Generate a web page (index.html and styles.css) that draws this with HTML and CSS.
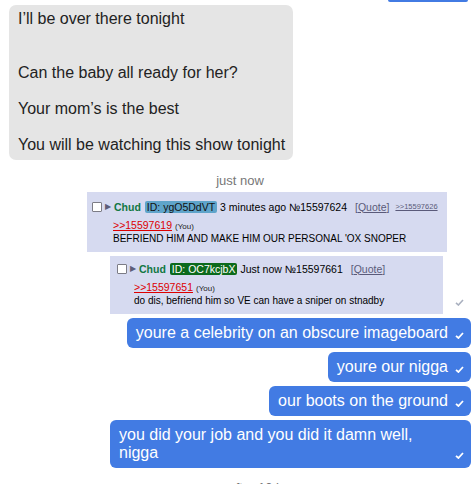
FILE: index.html
```html
<!DOCTYPE html>
<html>
<head>
<meta charset="utf-8">
<link rel="stylesheet" href="styles.css">
</head>
<body>
<div class="chat">
  <div class="tail"></div>
  <div class="row in">
    <div class="bubble grey">
      <p>I’ll be over there tonight<br><br></p>
      <p>Can the baby all ready for her?</p>
      <p>Your mom’s is the best</p>
      <p>You will be watching this show tonight</p>
    </div>
  </div>
  <div class="stamp">just now</div>
  <div class="row out">
    <div class="shot shot1">
      <div class="hdr">
        <span class="cb"></span><span class="tri">▶</span><span class="name">Chud</span><span class="id id-blue">ID: ygO5DdVT</span><span class="meta">3 minutes ago №15597624</span><span class="quote">[<u>Quote</u>]</span><span class="back">&gt;&gt;15597626</span>
      </div>
      <div class="body">
        <div class="qline"><span class="ql">&gt;&gt;15597619</span><span class="you">(You)</span></div>
        <div class="txt">BEFRIEND HIM AND MAKE HIM OUR PERSONAL 'OX SNOPER</div>
      </div>
    </div>
  </div>
  <div class="row out row-shot2">
    <div class="shot shot2">
      <div class="hdr">
        <span class="cb"></span><span class="tri">▶</span><span class="name">Chud</span><span class="id id-green">ID: OC7kcjbX</span><span class="meta">Just now №15597661</span><span class="quote">[<u>Quote</u>]</span>
      </div>
      <div class="body">
        <div class="qline"><span class="ql">&gt;&gt;15597651</span><span class="you">(You)</span></div>
        <div class="txt">do dis, befriend him so VE can have a sniper on stnadby</div>
      </div>
    </div>
    <svg class="tick-grey" width="9" height="7" viewBox="0 0 9 7"><path d="M1 3.8 L3.4 6 L8 1" fill="none" stroke="#a9b0bf" stroke-width="1.6"/></svg>
  </div>
  <div class="row out">
    <div class="bubble blue"><span class="btext">youre a celebrity on an obscure imageboard</span><svg class="tick" width="9" height="7" viewBox="0 0 9 7"><path d="M1 3.8 L3.4 6 L8 1" fill="none" stroke="#fff" stroke-width="1.8"/></svg></div>
  </div>
  <div class="row out">
    <div class="bubble blue"><span class="btext">youre our nigga</span><svg class="tick" width="9" height="7" viewBox="0 0 9 7"><path d="M1 3.8 L3.4 6 L8 1" fill="none" stroke="#fff" stroke-width="1.8"/></svg></div>
  </div>
  <div class="row out">
    <div class="bubble blue"><span class="btext">our boots on the ground</span><svg class="tick" width="9" height="7" viewBox="0 0 9 7"><path d="M1 3.8 L3.4 6 L8 1" fill="none" stroke="#fff" stroke-width="1.8"/></svg></div>
  </div>
  <div class="row out">
    <div class="bubble blue"><span class="btext">you did your job and you did it damn well, nigga</span><svg class="tick" width="9" height="7" viewBox="0 0 9 7"><path d="M1 3.8 L3.4 6 L8 1" fill="none" stroke="#fff" stroke-width="1.8"/></svg></div>
  </div>
  <div class="stamp stamp-bottom">seen after 10 h</div>
</div>
</body>
</html>
```
FILE: styles.css
```css
html, body {
  margin: 0;
  padding: 0;
  background: #fff;
}
body {
  width: 475px;
  height: 484px;
  overflow: hidden;
  font-family: "Liberation Sans", Arial, sans-serif;
}
.chat {
  display: flex;
  flex-direction: column;
}
.tail {
  align-self: flex-end;
  width: 80px;
  height: 2px;
  margin-right: 7px;
  background: #427be3;
  border-radius: 0 0 3px 3px;
}
.row {
  display: flex;
}
.row.in {
  justify-content: flex-start;
  padding-left: 9px;
  margin-top: 3px;
}
.row.out {
  justify-content: flex-end;
  padding-right: 4px;
  margin-top: 4px;
}
.bubble.grey {
  background: #e5e5e5;
  color: #222;
  font-size: 16px;
  line-height: 18px;
  padding: 5px 8px 6px 9px;
  border-radius: 7px;
}
.bubble.grey p {
  margin: 0 0 18px;
}
.bubble.grey p:last-child {
  margin-bottom: 0;
}
.stamp {
  text-align: center;
  font-size: 13px;
  line-height: 15px;
  color: #777;
  margin-top: 13px;
  padding-left: 5px;
}
.stamp-bottom {
  margin-top: 12px;
}

/* imageboard screenshots */
.shot {
  background: #d6daf0;
  color: #000;
  box-sizing: border-box;
  padding: 8px 0 7px 5px;
  white-space: nowrap;
}
.shot1 {
  width: 360px;
  margin-right: 24px;
}
.row-shot2 {
  align-items: flex-end;
  margin-top: 3px;
}
.shot2 {
  width: 333px;
  padding-top: 6px;
  padding-left: 7px;
}
.tick-grey {
  margin-left: 12px;
  margin-right: 7px;
  margin-bottom: 8px;
}
.hdr {
  display: flex;
  align-items: center;
  height: 13px;
  font-size: 10.5px;
}
.cb {
  width: 8px;
  height: 8px;
  border: 1px solid #7c7c86;
  background: #fff;
  border-radius: 1px;
  margin-right: 3px;
}
.tri {
  font-size: 8px;
  color: #5d5d78;
  margin-right: 3px;
}
.name {
  color: #117743;
  font-weight: bold;
  margin-right: 4px;
}
.id {
  padding: 0 2px;
  border-radius: 2px;
  margin-right: 3px;
  line-height: 12px;
}
.id-blue {
  background: #5fa4ca;
  color: #111;
}
.id-green {
  background: #0c6a1c;
  color: #fff;
}
.quote {
  color: #5a5a7a;
  margin-left: 8px;
}
.back {
  color: #5a5a7a;
  font-size: 7.5px;
  text-decoration: underline;
  margin-left: 6px;
}
.body {
  margin-top: 6px;
  padding-left: 21px;
}
.shot2 .body {
  padding-left: 17px;
}
.qline {
  height: 13px;
  line-height: 13px;
  font-size: 10.5px;
}
.ql {
  color: #dd0000;
  text-decoration: underline;
}
.you {
  font-size: 8px;
  margin-left: 3px;
  color: #222;
}
.txt {
  font-size: 10px;
  line-height: 13px;
  height: 13px;
}

/* blue bubbles */
.bubble.blue {
  background: #427be3;
  color: #fff;
  font-size: 16px;
  line-height: 18px;
  padding: 6px 7px 5px 9px;
  border-radius: 6px;
  display: flex;
  align-items: flex-end;
  gap: 7px;
  max-width: 361px;
  box-sizing: border-box;
}
.btext {
  padding-bottom: 1px;
}
.tick {
  flex: none;
  margin-bottom: 4px;
}
```
